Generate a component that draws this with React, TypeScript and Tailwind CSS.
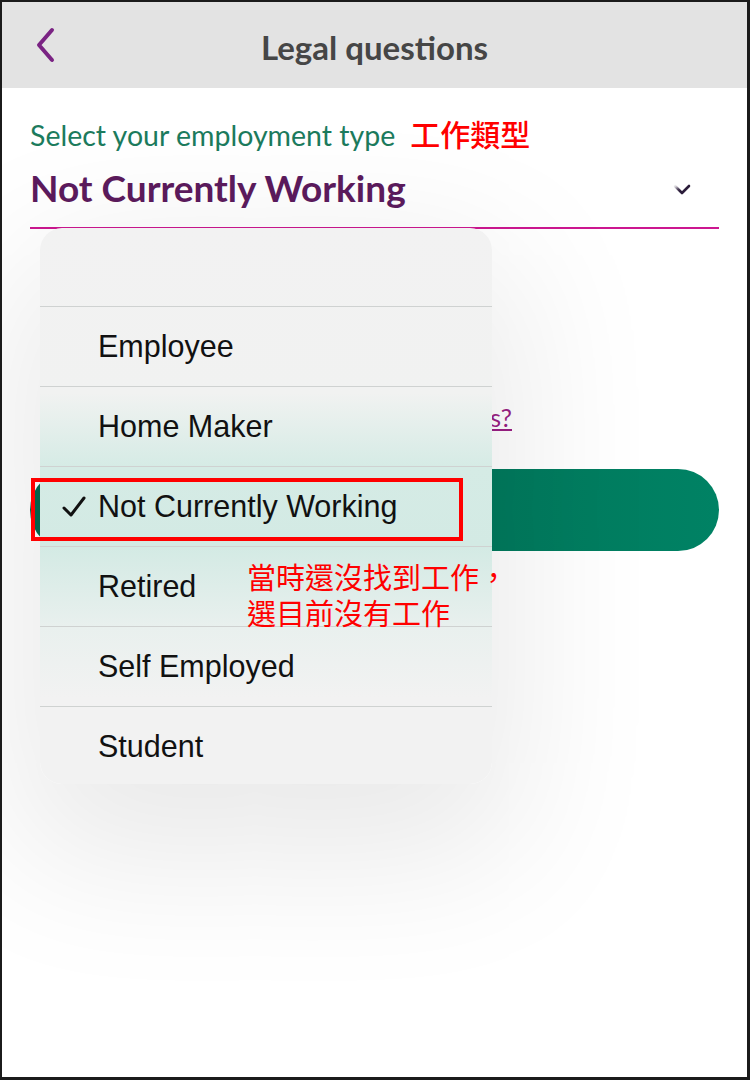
import React from 'react';

const options = ['Employee', 'Home Maker', 'Not Currently Working', 'Retired', 'Self Employed', 'Student'];
const selected = 'Not Currently Working';

const cjk = "font-['Noto_Sans_CJK_TC','Noto_Sans_CJK_SC',sans-serif]";

export default function App() {
  return (
    <div className="relative w-[750px] h-[1080px] overflow-hidden bg-white border-t-2 border-l-2 border-r-[3px] border-b-[3px] border-[#1b1b1b] font-['Lato','Noto_Sans',sans-serif]">
      {/* Header */}
      <div className="grid grid-cols-[80px_1fr_80px] items-center h-[86px] bg-[#e3e3e3]">
        <div className="pl-[33px]">
          <svg width="22" height="36" viewBox="0 0 22 36" fill="none">
            <polyline points="17,3 4,18 17,33" stroke="#7a2383" strokeWidth="4" strokeLinecap="round" strokeLinejoin="round" />
          </svg>
        </div>
        <h1 className="text-center text-[33px] leading-[40px] mt-[4px] font-bold text-[#464646]">Legal questions</h1>
        <div />
      </div>

      {/* Form behind the picker */}
      <div className="px-[28px] pt-[28px]">
        <div className="flex items-baseline leading-[34px]">
          <span className="text-[28.5px] text-[#1c7b5d]">Select your employment type</span>
          <span className={`ml-[15px] text-[30px] font-medium text-[#ff0000] ${cjk}`}>工作類型</span>
        </div>
        <div className="mt-[14px] flex items-center justify-between">
          <span className="text-[37px] leading-[44px] font-bold text-[#5c1b5d]">Not Currently Working</span>
          <svg className="mr-[28px] mt-[4px]" width="18" height="12" viewBox="0 0 18 12" fill="none">
            <polyline points="2,2 9,9 16,2" stroke="#2b1c3a" strokeWidth="2.6" strokeLinecap="round" strokeLinejoin="round" />
          </svg>
        </div>
        <div className="mt-[17px] h-[2px] bg-[#cc1790]" />
        <div className="mt-[173px] w-[482px] text-right text-[25px] leading-[30px] text-[#9a1f84] underline">
          Why do we ask these questions?
        </div>
        <button className="mt-[37px] w-full h-[82px] rounded-full bg-gradient-to-r from-[#00684e] to-[#008264] text-white text-[26px] font-bold">
          Continue
        </button>
      </div>

      {/* Ripple */}
      <div className="absolute left-[606px] top-[100px] w-[92px] h-[92px] rounded-full bg-white blur-[2px] z-20" />

      {/* Picker menu */}
      <div className="absolute left-[38px] top-[226px] z-10 w-[452px] h-[556px] rounded-[22px] overflow-hidden shadow-[0_50px_150px_24px_rgba(0,0,0,0.09)] bg-[linear-gradient(to_bottom,#f2f2f2_0px,#f1f2f1_165px,#d5ebe5_240px,#d3eae4_318px,#e9f0ee_400px,#f2f2f2_470px)] font-['Liberation_Sans','Arial',sans-serif]">
        <div className="h-[78px]" />
        {options.map((opt) => (
          <div key={opt} className="h-[80px] border-t border-[#cfd2d1] flex items-center">
            <div className="w-[58px] flex justify-end pr-[12px]">
              {opt === selected && (
                <svg width="24" height="22" viewBox="0 0 24 22" fill="none">
                  <polyline points="2,12 9,19 22,2" stroke="#111" strokeWidth="3" strokeLinecap="round" strokeLinejoin="round" />
                </svg>
              )}
            </div>
            <span className="text-[30.5px] text-[#111]">{opt}</span>
          </div>
        ))}
      </div>

      {/* Annotations */}
      <div className="absolute left-[29px] top-[476px] w-[432px] h-[63px] border-4 border-[#ff0000] z-30" />
      <div className={`absolute left-[245px] top-[556px] z-30 text-[29px] leading-[36px] text-[#ff0000] ${cjk}`}>
        <div>當時還沒找到工作，</div>
        <div>選目前沒有工作</div>
      </div>
    </div>
  );
}
